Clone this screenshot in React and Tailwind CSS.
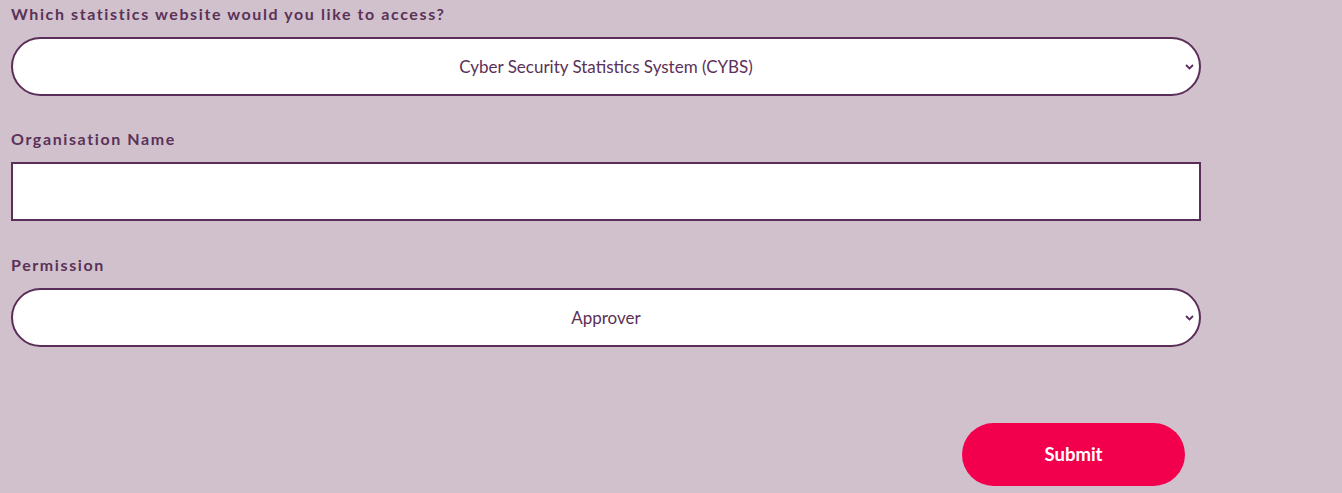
export default function App() {
  const font = { fontFamily: '"Lato", "Liberation Sans", sans-serif' };
  return (
    <div className="min-h-[493px] w-full bg-[#d0c1cd] pl-[11px] pt-[4px]" style={font}>
      <div className="w-[1190px]">
        <label className="block text-[16px] font-bold leading-[20px] tracking-[1.6px] text-[#5b3157]">
          Which statistics website would you like to access?
        </label>
        <div className="relative mt-[13px]">
          <select className="block h-[59px] w-full appearance-none rounded-full border-2 border-[#5b2d59] bg-white text-center text-[17px] text-[#5b3157] outline-none">
            <option>Cyber Security Statistics System (CYBS)</option>
          </select>
          <Chevron />
        </div>

        <label className="mt-[33px] block text-[16px] font-bold leading-[20px] tracking-[1.6px] text-[#5b3157]">
          Organisation Name
        </label>
        <input
          type="text"
          className="mt-[13px] block h-[59px] w-full border-2 border-[#5b2d59] bg-white px-3 text-[16px] text-[#5b3157] outline-none"
        />

        <label className="mt-[34px] block text-[16px] font-bold leading-[20px] tracking-[1.6px] text-[#5b3157]">
          Permission
        </label>
        <div className="relative mt-[13px]">
          <select className="block h-[59px] w-full appearance-none rounded-full border-2 border-[#5b2d59] bg-white text-center text-[17px] text-[#5b3157] outline-none">
            <option>Approver</option>
          </select>
          <Chevron />
        </div>

        <div className="mt-[76px] flex justify-end pr-[16px]">
          <button className="h-[63px] w-[223px] rounded-full bg-[#f2004d] text-[18.5px] font-bold text-white">
            Submit
          </button>
        </div>
      </div>
    </div>
  );
}

function Chevron() {
  return (
    <svg
      className="pointer-events-none absolute right-[7px] top-1/2 -translate-y-1/2"
      width="9"
      height="6"
      viewBox="0 0 9 6"
      fill="none"
    >
      <path d="M1 1l3.5 3.5L8 1" stroke="#5b2d59" strokeWidth="1.8" />
    </svg>
  );
}
